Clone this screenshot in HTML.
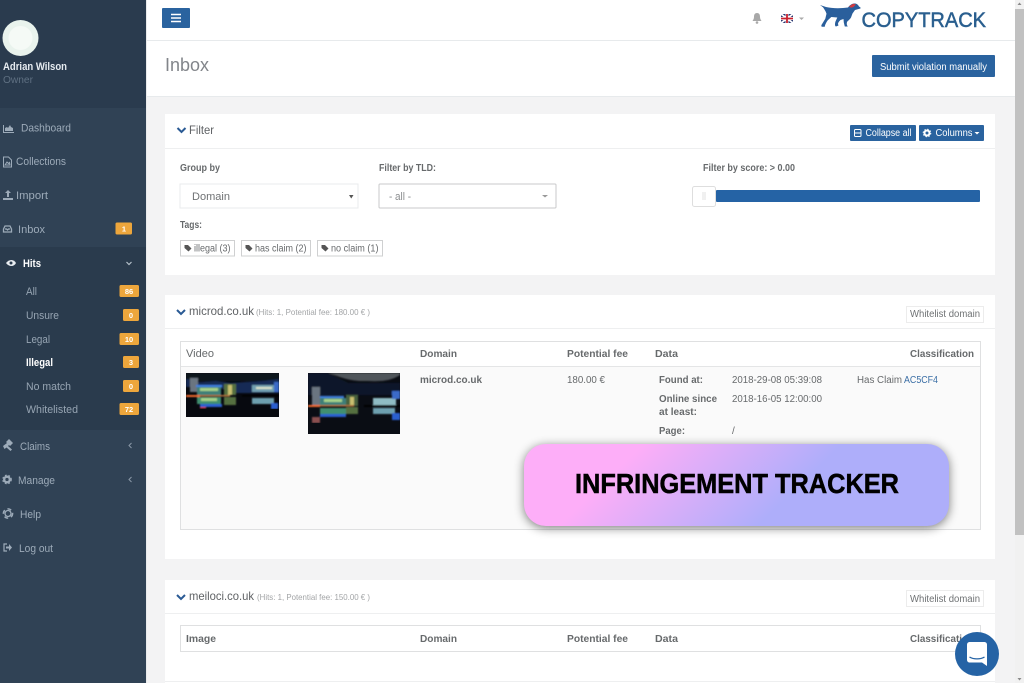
<!DOCTYPE html>
<html lang="en">
<head>
<meta charset="utf-8">
<title>Inbox</title>
<style>
html,body{margin:0;padding:0;width:1024px;height:683px;overflow:hidden;background:#f3f3f4}
svg{display:block}
#root{position:absolute;left:0;top:0;filter:blur(.3px)}
text{font-family:"Liberation Sans",sans-serif;white-space:pre}
.m{fill:#9dabb9;font-size:11px}
.s{fill:#97a5b3;font-size:11px}
.b{fill:#fff;font-size:7.5px;font-weight:700;text-anchor:middle}
.l{fill:#676a6c;font-size:10px;font-weight:700}
.t{fill:#676a6c;font-size:10px}
.th{fill:#676a6c;font-size:10.5px;font-weight:700}
.h{fill:#5f6265;font-size:12px}
.u{fill:#a3a5a7;font-size:8.5px}
</style>
</head>
<body>
<svg id="root" width="1024" height="683" viewBox="0 0 1024 683" xmlns="http://www.w3.org/2000/svg">
<defs>
<linearGradient id="g" x1="0" y1="0" x2="1" y2="0.2"><stop offset=".27" stop-color="#fdaef8"/><stop offset=".72" stop-color="#aeaefa"/></linearGradient>
<filter id="sh" x="-10%" y="-30%" width="120%" height="160%"><feGaussianBlur stdDeviation="5"/></filter>
<filter id="bl" x="0" y="0" width="100%" height="100%"><feGaussianBlur stdDeviation=".9"/></filter>
</defs>

<!-- main backgrounds -->
<rect width="1024" height="683" fill="#f3f3f4"/>
<rect x="147" y="0" width="868" height="40" fill="#fff"/>
<rect x="147" y="40" width="868" height="1" fill="#e7eaec"/>
<rect x="147" y="41" width="868" height="55" fill="#fff"/>
<rect x="147" y="96" width="868" height="1" fill="#e7eaec"/>

<!-- sidebar -->
<rect width="146" height="683" fill="#304255"/>
<rect width="146" height="108" fill="#2a3b4e"/>
<rect y="247" width="146" height="183" fill="#2a3b4d"/>
<rect x="146" width="1" height="683" fill="#e9eaeb"/>
<circle cx="20.5" cy="38" r="18" fill="#e9f3ed"/>
<circle cx="20.5" cy="38" r="12" fill="#f5faf6"/>
<text x="3" y="70" textLength="64" lengthAdjust="spacingAndGlyphs" fill="#e6ebf0" font-size="11" font-weight="700">Adrian Wilson</text>
<text x="3" y="83" textLength="30" lengthAdjust="spacingAndGlyphs" fill="#5f7082" font-size="10.5">Owner</text>

<!-- dashboard icon -->
<path d="M3 125v8h11v-1H4v-7zM5 131v-3l2-1 1 1 2-3 1 2 2 1v3z" fill="#9dabb9"/>
<text class="m" x="21" y="131.500" textLength="50" lengthAdjust="spacingAndGlyphs">Dashboard</text>
<!-- collections icon -->
<path d="M3.500 157h5l3 3v7h-8zM5 165l2-3 1.500 1.500 1-1 .5 2.500z" fill="none" stroke="#9dabb9" stroke-width="1"/>
<text class="m" x="16" y="165" textLength="50" lengthAdjust="spacingAndGlyphs">Collections</text>
<!-- import icon -->
<path d="M8 190l3 3H9v4H7v-4H5zM3 198h10v2H3z" fill="#9dabb9"/>
<text class="m" x="16" y="199" textLength="32" lengthAdjust="spacingAndGlyphs">Import</text>
<!-- inbox icon -->
<path d="M5 226h5l1.500 3v3h-8v-3zM5 229h1.500l1 1 1-1H10" fill="none" stroke="#9dabb9" stroke-width="1.300"/>
<text class="m" x="18" y="233" textLength="27" lengthAdjust="spacingAndGlyphs">Inbox</text>
<rect x="115.500" y="222.500" width="16.500" height="12" rx="1.500" fill="#eda63c"/>
<text class="b" x="124" y="231.500">1</text>
<!-- hits -->
<path d="M6 263c3-4 8-4 10 0-2 4-7 4-10 0z" fill="#e9edf1"/><circle cx="11" cy="263" r="1.500" fill="#2a3b4e"/>
<text x="23" y="267" textLength="18" lengthAdjust="spacingAndGlyphs" fill="#fff" font-size="11" font-weight="700">Hits</text>
<path d="M126.500 262l2.500 2.500 2.500-2.500" fill="none" stroke="#b5c0ca" stroke-width="1.200"/>

<text class="s" x="26" y="295" textLength="11" lengthAdjust="spacingAndGlyphs">All</text>
<rect x="119.500" y="285" width="19.500" height="12" rx="1.500" fill="#eda63c"/><text class="b" x="129" y="294">86</text>
<text class="s" x="26" y="319" textLength="33" lengthAdjust="spacingAndGlyphs">Unsure</text>
<rect x="123" y="309" width="16" height="12" rx="1.500" fill="#eda63c"/><text class="b" x="131" y="318">0</text>
<text class="s" x="26" y="343" textLength="24" lengthAdjust="spacingAndGlyphs">Legal</text>
<rect x="119.500" y="333" width="19.500" height="12" rx="1.500" fill="#eda63c"/><text class="b" x="129" y="342">10</text>
<text x="26" y="366" textLength="27" lengthAdjust="spacingAndGlyphs" fill="#fff" font-size="11" font-weight="700">Illegal</text>
<rect x="123" y="356" width="16" height="12" rx="1.500" fill="#eda63c"/><text class="b" x="131" y="365">3</text>
<text class="s" x="26" y="390" textLength="45" lengthAdjust="spacingAndGlyphs">No match</text>
<rect x="123" y="380" width="16" height="12" rx="1.500" fill="#eda63c"/><text class="b" x="131" y="389">0</text>
<text class="s" x="26" y="413" textLength="52" lengthAdjust="spacingAndGlyphs">Whitelisted</text>
<rect x="119.500" y="403" width="19.500" height="12" rx="1.500" fill="#eda63c"/><text class="b" x="129" y="412">72</text>

<!-- claims -->
<path d="M3 446l4-3-1-1 3-3 4 4-3 3-1-1-1 1 4 3.500-1.500 1.500-4-3.500-2 1.500z" fill="#9dabb9"/>
<text class="m" x="20" y="450" textLength="30" lengthAdjust="spacingAndGlyphs">Claims</text>
<path d="M131.500 443l-2.500 2.500 2.500 2.500" fill="none" stroke="#8b99a8" stroke-width="1"/>
<!-- manage -->
<circle cx="7" cy="479.500" r="2.800" fill="none" stroke="#9dabb9" stroke-width="2.300"/><circle cx="7" cy="479.500" r="4.300" fill="none" stroke="#9dabb9" stroke-width="1.100" stroke-dasharray="1.800 1.800"/>
<text class="m" x="18" y="484" textLength="37" lengthAdjust="spacingAndGlyphs">Manage</text>
<path d="M131.500 477l-2.500 2.500 2.500 2.500" fill="none" stroke="#8b99a8" stroke-width="1"/>
<!-- help -->
<circle cx="8" cy="513.500" r="3" fill="none" stroke="#9dabb9" stroke-width="1.300"/><circle cx="8" cy="513.500" r="4.600" fill="none" stroke="#9dabb9" stroke-width="1.500" stroke-dasharray="4 3"/>
<text class="m" x="20" y="518" textLength="21" lengthAdjust="spacingAndGlyphs">Help</text>
<!-- logout -->
<path d="M7 544H4v7h3" fill="none" stroke="#9dabb9" stroke-width="1.200"/><path d="M6 546.500h3V544l3 3.500-3 3.500v-2.500H6z" fill="#9dabb9"/>
<text class="m" x="19" y="552" textLength="34" lengthAdjust="spacingAndGlyphs">Log out</text>

<!-- top bar -->
<rect x="162" y="8" width="28" height="20" rx="1" fill="#2a639f"/>
<path d="M171 14.500h10M171 18h10M171 21.500h10" stroke="#fff" stroke-width="1.500"/>
<path d="M757 13c-2.500 0-3 2-3 4 0 2-1 3-1.500 4h9c-.5-1-1.500-2-1.500-4 0-2-.5-4-3-4z" fill="#a8a8a8"/><circle cx="757" cy="22.500" r="1.300" fill="#a8a8a8"/>
<!-- flag -->
<rect x="781" y="14" width="12" height="9" fill="#2b3a73"/>
<path d="M781 14l12 9M793 14l-12 9" stroke="#fff" stroke-width="1.800"/>
<path d="M787 14v9M781 18.500h12" stroke="#fff" stroke-width="3"/>
<path d="M787 14v9M781 18.500h12" stroke="#c8202e" stroke-width="1.800"/>
<path d="M799 17.500h5l-2.500 2.500z" fill="#aaa"/>
<!-- logo -->
<path d="M820 5l6 2c6 1.500 15 1.500 22 .5 1.500-2 3-3.500 6-4 2.500-.3 4 1 5 3l1.500 1v1l-5.500 1.500-2.500 3.500-1.500 4c-1.500 2.500-3 3-4 4.500-.5 2-.2 3 .8 4.500h-3l-1-4-.3-3.500-3 1c-1 1-2.500 2.500-2.500 4l.5 1.500-2.500 1c-1.500-.3-1-3.500-.5-5l1.800-4-6-.5-3.500 3.200c-1.500 2-3 5-3 6.500h-3.200l-.3-1.500 4-6.500 1.200-5c-1-3-2.500-5-3.500-6.500z" fill="#2a5f9c"/>
<path d="M849 6.500l4-2.800 3 .8-2.500 2.500-2.500.8z" fill="#d23a40"/>
<text x="861.500" y="27" textLength="124.500" lengthAdjust="spacingAndGlyphs" fill="#2a5f8f" font-size="21" stroke="#2a5f8f" stroke-width=".5">COPYTRACK</text>

<!-- heading -->
<text x="165" y="71" textLength="44" lengthAdjust="spacingAndGlyphs" fill="#82858a" font-size="18">Inbox</text>
<rect x="872" y="55" width="123" height="22" rx="1" fill="#2a639f"/>
<text x="880" y="70" textLength="107" lengthAdjust="spacingAndGlyphs" fill="#fff" font-size="10">Submit violation manually</text>

<!-- filter panel -->
<rect x="165" y="114" width="830" height="161" fill="#fff"/>
<rect x="165" y="148" width="830" height="1" fill="#eeeff0"/>
<path d="M177.500 128l4 4 4-4" fill="none" stroke="#2a5a94" stroke-width="2"/>
<text class="h" x="189" y="134" textLength="25" lengthAdjust="spacingAndGlyphs">Filter</text>
<rect x="850" y="125" width="66" height="16" rx="1" fill="#2a639f"/>
<rect x="854.500" y="129.500" width="6.500" height="7" rx="1" fill="none" stroke="#fff" stroke-width="1"/><path d="M854.500 133h6.500" stroke="#fff"/>
<text x="865.500" y="136" textLength="46" lengthAdjust="spacingAndGlyphs" fill="#fff" font-size="10">Collapse all</text>
<rect x="919" y="125" width="65" height="16" rx="1" fill="#2a639f"/>
<circle cx="927" cy="133" r="2.500" fill="none" stroke="#fff" stroke-width="2"/><circle cx="927" cy="133" r="3.800" fill="none" stroke="#fff" stroke-width="1" stroke-dasharray="1.500 1.500"/>
<text x="935.500" y="136" textLength="37" lengthAdjust="spacingAndGlyphs" fill="#fff" font-size="10">Columns</text>
<path d="M974.500 132h5l-2.500 2.500z" fill="#fff"/>

<text class="l" x="180" y="171" textLength="40" lengthAdjust="spacingAndGlyphs">Group by</text>
<text class="l" x="379" y="171" textLength="57" lengthAdjust="spacingAndGlyphs">Filter by TLD:</text>
<text class="l" x="703" y="171" textLength="92" lengthAdjust="spacingAndGlyphs">Filter by score: &gt; 0.00</text>

<rect x="180" y="184" width="178" height="24" fill="#fff" stroke="#eaebec"/>
<text x="192" y="200" textLength="38" lengthAdjust="spacingAndGlyphs" fill="#6f7274" font-size="11">Domain</text>
<path d="M349 195h4.500l-2.250 3.500z" fill="#555"/>
<rect x="379" y="184" width="177" height="24" rx="1" fill="#fff" stroke="#c9cacb"/>
<text x="389" y="200" textLength="22" lengthAdjust="spacingAndGlyphs" fill="#8a8c8e" font-size="11">- all -</text>
<path d="M542 195h6l-3 2.500z" fill="#999"/>

<rect x="716" y="190" width="264" height="12" rx="1" fill="#2563a5"/>
<rect x="692.500" y="186.500" width="23" height="20" rx="2" fill="#fff" stroke="#dedede"/>
<path d="M703 192v8M705 192v8" stroke="#e2e2e2"/>

<text class="l" x="180" y="228" textLength="22" lengthAdjust="spacingAndGlyphs">Tags:</text>
<rect x="180.500" y="240.500" width="54" height="15.500" fill="#fff" stroke="#cfd0d1"/>
<path d="M184.500 245h3.500l3.500 3.500-3 3-4-3.500z" fill="#555"/>
<text class="t" x="194" y="251.500" textLength="36.500" lengthAdjust="spacingAndGlyphs">illegal (3)</text>
<rect x="241.500" y="240.500" width="69" height="15.500" fill="#fff" stroke="#cfd0d1"/>
<path d="M245.500 245h3.500l3.500 3.500-3 3-4-3.500z" fill="#555"/>
<text class="t" x="255" y="251.500" textLength="51.500" lengthAdjust="spacingAndGlyphs">has claim (2)</text>
<rect x="317.500" y="240.500" width="65" height="15.500" fill="#fff" stroke="#cfd0d1"/>
<path d="M321.500 245h3.500l3.500 3.500-3 3-4-3.500z" fill="#555"/>
<text class="t" x="331" y="251.500" textLength="47.500" lengthAdjust="spacingAndGlyphs">no claim (1)</text>

<!-- microd panel -->
<rect x="165" y="295" width="830" height="264" fill="#fff"/>
<rect x="165" y="328" width="830" height="1" fill="#eeeff0"/>
<path d="M177 310l4 4 4-4" fill="none" stroke="#2a5a94" stroke-width="2"/>
<text class="h" x="189" y="315" textLength="65" lengthAdjust="spacingAndGlyphs">microd.co.uk</text>
<text class="u" x="256" y="315" textLength="114" lengthAdjust="spacingAndGlyphs">(Hits: 1, Potential fee: 180.00 € )</text>
<rect x="906.500" y="306.500" width="77" height="16" fill="#fff" stroke="#ececec"/>
<text x="910" y="317" textLength="70" lengthAdjust="spacingAndGlyphs" fill="#6f7274" font-size="10">Whitelist domain</text>

<rect x="180.500" y="341.500" width="800" height="188" fill="#fafafa" stroke="#dfe0e1"/>
<rect x="181" y="342" width="799" height="24" fill="#fff"/>
<rect x="181" y="366" width="799" height="1" fill="#e4e5e6"/>
<text x="186" y="357" textLength="28" lengthAdjust="spacingAndGlyphs" fill="#676a6c" font-size="11">Video</text>
<text class="th" x="420" y="357" textLength="37" lengthAdjust="spacingAndGlyphs">Domain</text>
<text class="th" x="567" y="357" textLength="61" lengthAdjust="spacingAndGlyphs">Potential fee</text>
<text class="th" x="655" y="357" textLength="23" lengthAdjust="spacingAndGlyphs">Data</text>
<text class="th" x="910" y="357" textLength="64" lengthAdjust="spacingAndGlyphs">Classification</text>

<!-- image 1 -->
<svg x="186" y="373" width="93" height="44" viewBox="0 0 93 44">
<rect width="93" height="44" fill="#07090f"/>
<g filter="url(#bl)">
<rect width="93" height="8" fill="#10161f"/>
<path d="M0 6L14 9 30 8 45 10 60 9 78 8 93 6V20H50L30 14H0z" fill="#152a55"/>
<rect x="4" y="5" width="8" height="14" fill="#6a7480"/>
<rect x="10" y="12" width="26" height="2" fill="#3f7fe0"/><rect x="11" y="14" width="24" height="8" fill="#3c7f78"/><rect x="14" y="15" width="18" height="3" fill="#a6d28a"/>
<rect x="38" y="11" width="12" height="11" fill="#55703f"/><rect x="42" y="12" width="4" height="10" fill="#c9c070"/>
<rect x="66" y="12" width="22" height="7" fill="#6f9fb0"/><rect x="70" y="14" width="16" height="2" fill="#dde4cc"/><rect x="88" y="9" width="5" height="10" fill="#3a6ac8"/>
<rect x="0" y="22" width="14" height="2" fill="#f0682a"/><rect x="14" y="22" width="30" height="1.500" fill="#b0703a"/><rect x="56" y="22" width="37" height="1.500" fill="#000"/>
<rect x="11" y="24" width="24" height="7" fill="#3f8f70"/><rect x="15" y="25" width="16" height="3" fill="#a6d28a"/><rect x="14" y="31" width="22" height="3" fill="#2c5ed0"/><rect x="14" y="34" width="6" height="1.500" fill="#c83030"/>
<rect x="38" y="24" width="12" height="8" fill="#55703f"/><rect x="66" y="25" width="22" height="6" fill="#6ea0b0"/>
<rect x="85" y="30" width="7" height="6" fill="#2c5ed0"/>
</g>
</svg>
<!-- image 2 -->
<svg x="308" y="373" width="92" height="61" viewBox="0 0 92 61">
<rect width="92" height="61" fill="#0a0d14"/>
<g filter="url(#bl)">
<path d="M0 0H92V2C80 10 66 8 54 8 40 8 30 3 20 0z" fill="#50545a"/>
<path d="M0 0H20L40 10H92V22H0z" fill="#11192a"/>
<rect x="4" y="14" width="8" height="18" fill="#6a7480"/>
<rect x="12" y="23" width="24" height="2" fill="#3f7fe0"/><rect x="12" y="25" width="26" height="7" fill="#3c7f78"/><rect x="16" y="26" width="18" height="3" fill="#a6d28a"/>
<rect x="38" y="22" width="12" height="11" fill="#47603e"/><rect x="42" y="24" width="4" height="9" fill="#c9c070"/>
<rect x="65" y="25" width="23" height="7" fill="#8fbcc4"/><rect x="84" y="18" width="8" height="8" fill="#3a6ac8"/>
<rect x="0" y="32" width="12" height="2" fill="#f0682a"/><rect x="12" y="32" width="34" height="1.500" fill="#b0703a"/><rect x="56" y="32" width="36" height="2" fill="#000"/>
<rect x="12" y="35" width="26" height="6" fill="#3f8f70"/><rect x="12" y="41" width="26" height="3" fill="#2c5ed0"/>
<rect x="38" y="34" width="12" height="7" fill="#55703f"/><rect x="65" y="35" width="22" height="6" fill="#6ea0b0"/>
<rect x="84" y="40" width="8" height="7" fill="#2c5ed0"/><rect x="4" y="44" width="8" height="6" fill="#8a5050"/>
</g>
</svg>

<text class="l" x="420" y="383" textLength="62" lengthAdjust="spacingAndGlyphs">microd.co.uk</text>
<text class="t" x="567" y="383" textLength="38" lengthAdjust="spacingAndGlyphs">180.00 €</text>
<text class="l" x="659" y="383" textLength="44" lengthAdjust="spacingAndGlyphs">Found at:</text>
<text class="t" x="732" y="383" textLength="90" lengthAdjust="spacingAndGlyphs">2018-29-08 05:39:08</text>
<text class="t" x="857" y="383" textLength="45" lengthAdjust="spacingAndGlyphs">Has Claim</text>
<text x="904" y="383" textLength="34" lengthAdjust="spacingAndGlyphs" fill="#3a6ea5" font-size="10">AC5CF4</text>
<text class="l" x="659" y="402" textLength="58" lengthAdjust="spacingAndGlyphs">Online since</text>
<text class="t" x="732" y="402" textLength="90" lengthAdjust="spacingAndGlyphs">2018-16-05 12:00:00</text>
<text class="l" x="659" y="415" textLength="38" lengthAdjust="spacingAndGlyphs">at least:</text>
<text class="l" x="659" y="434" textLength="26" lengthAdjust="spacingAndGlyphs">Page:</text>
<text class="t" x="732" y="434">/</text>

<!-- meiloci panel -->
<rect x="165" y="580" width="830" height="103" fill="#fff"/>
<rect x="165" y="613" width="830" height="1" fill="#eeeff0"/>
<rect x="165" y="681" width="830" height="1" fill="#eeeff0"/>
<path d="M177 595l4 4 4-4" fill="none" stroke="#2a5a94" stroke-width="2"/>
<text class="h" x="189" y="600" textLength="65" lengthAdjust="spacingAndGlyphs">meiloci.co.uk</text>
<text class="u" x="257" y="600" textLength="113" lengthAdjust="spacingAndGlyphs">(Hits: 1, Potential fee: 150.00 € )</text>
<rect x="906.500" y="590.500" width="77" height="16" fill="#fff" stroke="#ececec"/>
<text x="910" y="602" textLength="70" lengthAdjust="spacingAndGlyphs" fill="#6f7274" font-size="10">Whitelist domain</text>
<rect x="180.500" y="625.500" width="800" height="26" fill="#fff" stroke="#dfe0e1"/>
<text class="th" x="186" y="642" textLength="30" lengthAdjust="spacingAndGlyphs">Image</text>
<text class="th" x="420" y="642" textLength="37" lengthAdjust="spacingAndGlyphs">Domain</text>
<text class="th" x="567" y="642" textLength="61" lengthAdjust="spacingAndGlyphs">Potential fee</text>
<text class="th" x="655" y="642" textLength="23" lengthAdjust="spacingAndGlyphs">Data</text>
<text class="th" x="910" y="642" textLength="64" lengthAdjust="spacingAndGlyphs">Classification</text>

<!-- scrollbar -->
<rect x="1015" y="0" width="9" height="683" fill="#f1f1f1"/>
<rect x="1015" y="9" width="9" height="526" fill="#c1c1c1"/>
<path d="M1017.500 5l2-2.500 2 2.500z" fill="#8a8a8a"/>
<path d="M1017.500 678l2 2.500 2-2.500z" fill="#8a8a8a"/>

<!-- banner -->
<rect x="524" y="446" width="425" height="82" rx="22" fill="#000" opacity=".5" filter="url(#sh)"/>
<rect x="524" y="444" width="425" height="82" rx="22" fill="url(#g)"/>
<text x="575" y="493" textLength="324" lengthAdjust="spacingAndGlyphs" fill="#000" font-size="27.500" font-weight="700" stroke="#000" stroke-width=".5">INFRINGEMENT TRACKER</text>

<!-- chat -->
<circle cx="977" cy="654" r="22" fill="#2563a5"/>
<path d="M970 642h14c2 0 3 1 3 3v21l-5-3.500h-12c-2 0-3-1-3-3V645c0-2 1-3 3-3z" fill="#fff"/>
<path d="M969.500 657c4 2.500 11 2.500 15 0" fill="none" stroke="#2563a5" stroke-width="1.300"/>
</svg>
</body>
</html>
